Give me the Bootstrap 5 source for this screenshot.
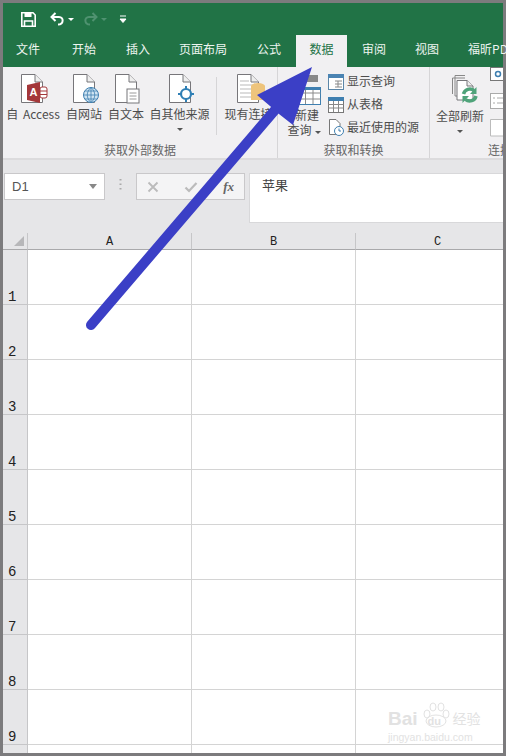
<!DOCTYPE html>
<html lang="zh-CN">
<head>
<meta charset="UTF-8">
<meta name="viewport" content="width=device-width, initial-scale=1.0">
<title>Excel 数据</title>
<link href="https://cdn.jsdelivr.net/npm/bootstrap@5.3.0/dist/css/bootstrap.min.css" rel="stylesheet">
<style>
  html, body { margin: 0; height: 756px; overflow: hidden; }
  body { background: #7c7b7d; font-family: "Noto Sans CJK SC", "Liberation Sans", sans-serif; font-size: 12px; color: #4d4d4d; line-height: 1.2; }
  .xl-frame { position: relative; height: 756px; padding: 3px; overflow: hidden; }
  .xl-title { height: 32px; background: #217346; padding-left: 18px; }
  .xl-undo { margin-left: 14px; }
  .xl-redo { margin-left: 9px; }
  .xl-qat { margin-left: 12px; }
  .xl-tabs { height: 32px; background: #217346; color: #fff; padding-left: 13px; }
  .xl-tab { height: 32px; line-height: 28px; white-space: nowrap; color: #eef5f0; flex: none; }
  .xl-tab.on { background: #f1f0f2; color: #217346; text-align: center; width: 51px; }
  .xl-ribbon { height: 93px; background: #f1f0f2; border-bottom: 2px solid #dcdbdd; overflow: hidden; }
  .xl-group { position: relative; height: 91px; border-right: 1px solid #d6d5d7; flex: none; }
  .xl-group-name { position: absolute; left: 0; right: 0; top: 76px; text-align: center; color: #666; white-space: nowrap; }
  .xl-big { width: 42px; padding-top: 7px; text-align: center; flex: none; white-space: nowrap; }
  .xl-big svg { display: block; margin: 0 auto 3px; padding-left: 6px; box-sizing: content-box; }
  .xl-caret { display: block; width: 0; height: 0; margin: 7px auto 0; border: 3px solid transparent; border-top: 3px solid #555; border-bottom: 0; }
  .xl-caret-in { display: inline-block; width: 0; height: 0; margin-left: 3px; vertical-align: middle; border: 3px solid transparent; border-top: 3px solid #555; border-bottom: 0; }
  .xl-vsep { width: 1px; height: 58px; margin: 10px 6px 0 4px; background: #d6d5d7; flex: none; }
  .xl-smalls { margin-left: 2px; padding-top: 3px; }
  .xl-small { height: 23px; white-space: nowrap; gap: 3px; }
  .xl-fbar { height: 73px; background: #e6e6e8; padding: 13px 0 0 1px; }
  .xl-box { background: #fff; border: 1px solid #c9c8ca; height: 27px; }
  .xl-name { width: 101px; padding: 0 7px; font-family: "Liberation Sans", sans-serif; font-size: 13px; color: #555; }
  .xl-name-caret { border: 4px solid transparent; border-top: 5px solid #888; border-bottom: 0; }
  .xl-dots { width: 31px; color: #aaa; flex: none; }
  .xl-fx-box { width: 109px; background: #f4f4f5; margin-right: 4px; padding: 0 10px; flex: none; }
  .xl-fx { font-family: "Liberation Serif", serif; font-style: italic; font-weight: bold; font-size: 13px; color: #666; }
  .xl-input { height: 50px; flex: 1 1 auto; background: #fff; border: 1px solid #d8d8da; border-right: 0; padding: 3px 12px; font-size: 13px; color: #444; }
  .xl-sheet { display: grid; grid-template-columns: 25px 164px 164px 164px; grid-template-rows: 17px repeat(9, 55px) 10px; background: #fff; font-family: "Liberation Mono", monospace; font-size: 12px; color: #222; overflow: hidden; height: 520px; }
  .xl-corner { background: #e6e6e8; border-right: 1px solid #c6c6c8; border-bottom: 1px solid #a9a9ab; position: relative; }
  .xl-corner::after { content: ""; position: absolute; right: 3px; bottom: 3px; border-style: solid; border-width: 0 0 10px 10px; border-color: transparent transparent #b7b7b9 transparent; }
  .xl-colh { background: #e6e6e8; border-right: 1px solid #c6c6c8; border-bottom: 1px solid #a9a9ab; text-align: center; line-height: 14px; padding-top: 2px; }
  .xl-rowh { background: #e6e6e8; border-right: 1px solid #c6c6c8; border-bottom: 1px solid #c6c6c8; padding-left: 5px; display: flex; align-items: flex-end; font-size: 14px; line-height: 13px; }
  .xl-cell { border-right: 1px solid #d4d4d4; border-bottom: 1px solid #d4d4d4; }
  .xl-arrow { position: absolute; left: 0; top: 0; pointer-events: none; }
  .xl-mark { position: absolute; left: 388px; top: 702px; width: 92px; color: #e2e2e2; font-family: "Liberation Sans", sans-serif; white-space: nowrap; }
  .xl-mark-main { height: 26px; gap: 3px; font-size: 19px; font-weight: bold; line-height: 19px; }
  .xl-mark-logo { position: relative; width: 27px; height: 26px; margin-left: 2px; flex: none; }
  .xl-mark-du { position: absolute; left: 5px; bottom: 0; font-size: 11px; line-height: 13px; }
  .xl-mark-cn { font-family: "Noto Sans CJK SC", sans-serif; font-size: 14px; font-weight: normal; }
  .xl-mark-sub { font-size: 10.5px; line-height: 12px; margin-top: 3px; }
</style>
</head>
<body>
<svg width="0" height="0" class="position-absolute">
  <symbol id="doc" viewBox="0 0 24 30"><path d="M1.500.5H15L22.500 8V28.500H1.500Z" fill="#fff" stroke="#77767a"/><path d="M15 .5V8H22.500" fill="#eee" stroke="#77767a"/></symbol>
</svg>
<div class="xl-frame">
  <!-- 标题栏 -->
  <div class="xl-title d-flex align-items-center">
    <svg width="15" height="15" viewBox="0 0 15 15"><path d="M.8.8H12L14.200 3V14.200H.8Z" fill="none" stroke="#fff" stroke-width="1.600"/><rect x="3.500" y="1" width="7" height="4" fill="#fff"/><path d="M3.500 14V9H11.500V14" fill="none" stroke="#fff" stroke-width="1.600"/></svg>
    <svg class="xl-undo" width="15" height="14" viewBox="0 0 15 14"><path d="M5.500 1 1.500 5 5.500 9M2 5H9C14 5 14 12.500 8 12.500" fill="none" stroke="#fff" stroke-width="2"/></svg>
    <span class="xl-caret-in" style="border-top-color:#fff"></span>
    <svg class="xl-redo" width="15" height="14" viewBox="0 0 15 14"><path d="M9.500 1 13.500 5 9.500 9M13 5H6C1 5 1 12.500 7 12.500" fill="none" stroke="#4f9270" stroke-width="2"/></svg>
    <span class="xl-caret-in" style="border-top-color:#4f9270"></span>
    <svg class="xl-qat" width="8" height="8" viewBox="0 0 8 8"><path d="M1 1H7M1 4H7L4 7.500Z" fill="#fff" stroke="#fff"/></svg>
  </div>
  <!-- 选项卡 -->
  <div class="xl-tabs d-flex">
    <div class="xl-tab" style="margin-right:32px">文件</div>
    <div class="xl-tab" style="margin-right:30px">开始</div>
    <div class="xl-tab" style="margin-right:29px">插入</div>
    <div class="xl-tab" style="margin-right:30px">页面布局</div>
    <div class="xl-tab" style="margin-right:15px">公式</div>
    <div class="xl-tab on" style="margin-right:15px">数据</div>
    <div class="xl-tab" style="margin-right:29px">审阅</div>
    <div class="xl-tab" style="margin-right:29px">视图</div>
    <div class="xl-tab">福昕PDF</div>
  </div>
  <!-- 功能区 -->
  <div class="xl-ribbon d-flex">
    <div class="xl-group d-flex" style="width:275px">
      <div class="xl-big" style="width:60px;word-spacing:2px">
        <svg width="32" height="30" viewBox="0 0 32 30"><use href="#doc" width="24" height="30"/><path d="M7 11 20 8V29L7 26Z" fill="#a4373a"/><rect x="20" y="13" width="7" height="11" rx="2" fill="#fff" stroke="#a4373a"/><path d="M20 17H27M20 20.500H27" stroke="#a4373a"/><text x="13.500" y="22" text-anchor="middle" font-size="11" font-weight="bold" fill="#fff" font-family="Liberation Sans">A</text></svg>
        自 Access
      </div>
      <div class="xl-big">
        <svg width="32" height="30" viewBox="0 0 32 30"><use href="#doc" x="1" width="24" height="30"/><circle cx="20" cy="21" r="7.500" fill="#cfe4f2" stroke="#3f7fb0"/><path d="M12.500 21H27.500M20 13.500V28.500M14 17H26M14 25H26M20 13.500C15 18 15 24 20 28.500M20 13.500C25 18 25 24 20 28.500" fill="none" stroke="#3f7fb0" stroke-width=".8"/></svg>
        自网站
      </div>
      <div class="xl-big">
        <svg width="32" height="30" viewBox="0 0 32 30"><use href="#doc" x="1" width="24" height="30"/><rect x="14" y="15" width="12" height="14" fill="#fff" stroke="#77767a"/><path d="M16.500 19H23.500M16.500 22H23.500M16.500 25H23.500" stroke="#9a9a9a"/></svg>
        自文本
      </div>
      <div class="xl-big" style="width:65px">
        <svg width="32" height="30" viewBox="0 0 32 30"><use href="#doc" x="1" width="24" height="30"/><path d="M19 12V28M11 20H27" stroke="#2f7fb5" stroke-width="2"/><circle cx="19" cy="20" r="5" fill="#fff" stroke="#2f7fb5" stroke-width="2.200"/></svg>
        自其他来源
        <span class="xl-caret"></span>
      </div>
      <div class="xl-vsep"></div>
      <div class="xl-big" style="width:51px">
        <svg width="32" height="30" viewBox="0 0 32 30"><use href="#doc" width="24" height="30"/><path d="M4 7H13M4 11H18M4 15H18M4 19H18M4 23H18" stroke="#b9b9b9"/><ellipse cx="22" cy="12" rx="7" ry="3" fill="#eec47c"/><rect x="15" y="12" width="14" height="14" fill="#eec47c"/></svg>
        现有连接
      </div>
      <div class="xl-group-name">获取外部数据</div>
    </div>
    <div class="xl-group d-flex" style="width:152px">
      <div class="xl-big ms-1" style="width:44px;padding-top:6px">
        <svg width="32" height="32" viewBox="0 0 32 32"><rect x="9" y="2" width="18" height="7" fill="#888"/><rect x="7.500" y="14.500" width="22" height="17" fill="#fff" stroke="#3f7fb0"/><path d="M7.500 20H29.500M7.500 26H29.500M14.500 15V31M22 15V31" stroke="#8a8a8a"/><rect x="7.500" y="14" width="22" height="3" fill="#3f7fb0"/></svg>
        <div style="padding-left:6px">新建</div>
        <div style="margin-top:1px">查询<span class="xl-caret-in"></span></div>
      </div>
      <div class="xl-smalls">
        <div class="xl-small d-flex align-items-center">
          <svg width="16" height="16" viewBox="0 0 16 16"><rect x=".5" y=".5" width="15" height="15" fill="#fff" stroke="#5b86a8"/><rect y="0" width="16" height="4" fill="#4b84b3"/><path d="M7 7H14M7 10H14M7 13H14M10 7V13" stroke="#888"/></svg>
          显示查询
        </div>
        <div class="xl-small d-flex align-items-center">
          <svg width="16" height="16" viewBox="0 0 16 16"><rect x=".5" y=".5" width="15" height="15" fill="#fff" stroke="#777"/><rect y="0" width="16" height="4" fill="#3f7fb0"/><path d="M.5 7.500H15.500M.5 11H15.500M5.500 4V15M10.500 4V15" stroke="#888"/></svg>
          从表格
        </div>
        <div class="xl-small d-flex align-items-center">
          <svg width="16" height="17" viewBox="0 0 16 17"><path d="M1.500.5H8L12 4.500V15.500H1.500Z" fill="#fff" stroke="#777"/><circle cx="11" cy="12" r="4.500" fill="#fff" stroke="#3f7fb0"/><path d="M11 9.500V12H13" fill="none" stroke="#3f7fb0"/></svg>
          最近使用的源
        </div>
      </div>
      <div class="xl-group-name">获取和转换</div>
    </div>
    <div class="xl-group d-flex border-0 flex-grow-1" style="flex-shrink:1;min-width:0">
      <div class="xl-big" style="width:60px;padding-top:7px">
        <svg width="32" height="32" viewBox="0 0 32 32"><path d="M8 1.500H18M5.500 4H18M5.500 4V20M8 1.500V4" fill="none" stroke="#888"/><path d="M8 4V22H10" fill="none" stroke="#888"/><path d="M10 6.500H20L26 12V26H10Z" fill="#fff" stroke="#77767a"/><path d="M20 6.500V12H26" fill="#eee" stroke="#77767a"/><path d="M16.500 20A6.500 6.500 0 0 1 27 16.500M29 22A6.500 6.500 0 0 1 18.500 25.500" fill="none" stroke="#4fa37a" stroke-width="3.500"/><path d="M29.500 13V20H23ZM15.500 29V22H22Z" fill="#4fa37a"/></svg>
        全部刷新
        <span class="xl-caret"></span>
      </div>
      <div class="xl-tools">
        <svg class="d-block mb-2" width="14" height="18" viewBox="0 0 14 18"><rect x=".5" y=".5" width="16" height="13" fill="#fff" stroke="#777"/><circle cx="8" cy="7" r="2.500" fill="none" stroke="#3f7fb0" stroke-width="1.500"/></svg>
        <svg class="d-block mb-2" width="14" height="18" viewBox="0 0 14 18"><rect x=".5" y=".5" width="16" height="15" fill="#fff" stroke="#aaa"/><path d="M3 5H5M7 5H14M3 10H5M7 10H14" stroke="#aaa"/></svg>
        <svg class="d-block" width="14" height="18" viewBox="0 0 14 18"><path d="M.5.5H14V17H.5Z" fill="#fff" stroke="#bbb"/></svg>
      </div>
      <div class="xl-group-name text-start" style="left:58px">连接</div>
    </div>
  </div>
  <!-- 编辑栏 -->
  <div class="xl-fbar d-flex align-items-start">
    <div class="xl-box xl-name d-flex align-items-center justify-content-between"><span>D1</span><span class="xl-name-caret"></span></div>
    <div class="xl-dots d-flex justify-content-center pt-1 lh-1">
      <svg width="3" height="14" viewBox="0 0 3 14"><path d="M1.500 2V3.500M1.500 6.500V8M1.500 11V12.500" stroke="#aaa" stroke-width="2"/></svg>
    </div>
    <div class="xl-box xl-fx-box d-flex align-items-center justify-content-between">
      <svg width="12" height="12" viewBox="0 0 12 12"><path d="M1.500 1.500 10.500 10.500M10.500 1.500 1.500 10.500" stroke="#bbb" stroke-width="1.800"/></svg>
      <svg width="14" height="12" viewBox="0 0 14 12"><path d="M1.500 6.500 5 10 12.500 2" fill="none" stroke="#bbb" stroke-width="2.200"/></svg>
      <span class="xl-fx">fx</span>
    </div>
    <div class="xl-input">苹果</div>
  </div>
  <!-- 工作表 -->
  <div class="xl-sheet">
    <div class="xl-corner"></div><div class="xl-colh">A</div><div class="xl-colh">B</div><div class="xl-colh">C</div>
    <div class="xl-rowh">1</div><div class="xl-cell"></div><div class="xl-cell"></div><div class="xl-cell"></div>
    <div class="xl-rowh">2</div><div class="xl-cell"></div><div class="xl-cell"></div><div class="xl-cell"></div>
    <div class="xl-rowh">3</div><div class="xl-cell"></div><div class="xl-cell"></div><div class="xl-cell"></div>
    <div class="xl-rowh">4</div><div class="xl-cell"></div><div class="xl-cell"></div><div class="xl-cell"></div>
    <div class="xl-rowh">5</div><div class="xl-cell"></div><div class="xl-cell"></div><div class="xl-cell"></div>
    <div class="xl-rowh">6</div><div class="xl-cell"></div><div class="xl-cell"></div><div class="xl-cell"></div>
    <div class="xl-rowh">7</div><div class="xl-cell"></div><div class="xl-cell"></div><div class="xl-cell"></div>
    <div class="xl-rowh">8</div><div class="xl-cell"></div><div class="xl-cell"></div><div class="xl-cell"></div>
    <div class="xl-rowh">9</div><div class="xl-cell"></div><div class="xl-cell"></div><div class="xl-cell"></div>
    <div class="xl-rowh border-bottom-0"></div><div class="xl-cell border-bottom-0"></div><div class="xl-cell border-bottom-0"></div><div class="xl-cell border-bottom-0"></div>
  </div>
  <!-- 百度经验水印 -->
  <div class="xl-mark">
    <div class="xl-mark-main d-flex align-items-end">
      <span>Bai</span>
      <span class="xl-mark-logo">
        <svg width="27" height="26" viewBox="0 0 27 26" fill="none" stroke="#e2e2e2"><ellipse cx="4" cy="12" rx="3" ry="4"/><ellipse cx="10" cy="5" rx="3" ry="4"/><ellipse cx="18" cy="5" rx="3" ry="4"/><ellipse cx="23" cy="12" rx="3" ry="4"/><ellipse cx="13" cy="19" rx="10" ry="6"/></svg>
        <span class="xl-mark-du">du</span>
      </span>
      <span class="xl-mark-cn">经验</span>
    </div>
    <div class="xl-mark-sub">jingyan.baidu.com</div>
  </div>
  <!-- 箭头标注 -->
  <svg class="xl-arrow" width="506" height="756" viewBox="0 0 506 756">
    <path d="M91 325 275 110" stroke="#3b3fc6" stroke-width="10" stroke-linecap="round"/>
    <path d="M312 67 257 95 270 106 279 114 293 125Z" fill="#3b3fc6"/>
  </svg>
</div>
<script src="https://cdn.jsdelivr.net/npm/bootstrap@5.3.0/dist/js/bootstrap.bundle.min.js"></script>
</body>
</html>
